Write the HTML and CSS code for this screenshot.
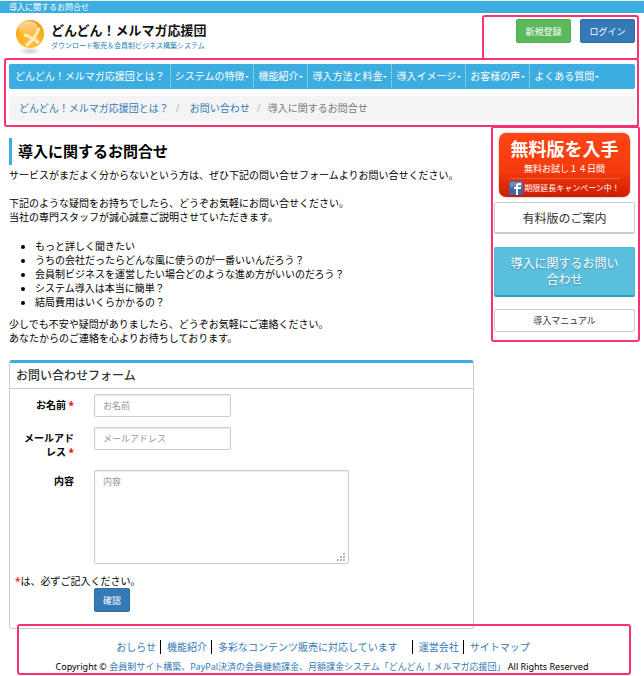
FILE: index.html
```
<!DOCTYPE html>
<html lang="ja">
<head>
    <meta charset="UTF-8">
    <meta name="viewport" content="width=device-width, initial-scale=1.0">
    <title>導入に関するお問合せ</title>
    <link rel="stylesheet" href="styles.css">
</head>
<body>
    <div class="topbar">導入に関するお問合せ</div>

    <header class="header">
        <a class="logo" href="#">
            <svg class="logo-mark" width="30" height="38" viewBox="0 0 30 38" aria-hidden="true">
                <defs>
                    <radialGradient id="ball" cx="50%" cy="80%" r="75%">
                        <stop offset="0" stop-color="#ffc43c"/>
                        <stop offset="0.6" stop-color="#fbb022"/>
                        <stop offset="1" stop-color="#f0a010"/>
                    </radialGradient>
                    <linearGradient id="shine" x1="0" y1="0" x2="0" y2="1">
                        <stop offset="0" stop-color="#fff" stop-opacity="0.6"/>
                        <stop offset="1" stop-color="#fff" stop-opacity="0.1"/>
                    </linearGradient>
                    <radialGradient id="shade">
                        <stop offset="0" stop-color="#ccc"/>
                        <stop offset="1" stop-color="#fff"/>
                    </radialGradient>
                </defs>
                <ellipse cx="15" cy="32" rx="11" ry="4" fill="url(#shade)"/>
                <circle cx="15" cy="15" r="14" fill="url(#ball)"/>
                <path d="M24 9c-2 7-6 12-13 18M9 16c6 1 10 4 15 8" fill="none" stroke="#ffedc0" stroke-width="3"/>
                <ellipse cx="13" cy="9" rx="10" ry="7" fill="url(#shine)"/>
            </svg>
            <span class="logo-text">
                <strong>どんどん！メルマガ応援団</strong>
                <small>ダウンロード販売＆会員制ビジネス構築システム</small>
            </span>
        </a>
        <div class="account">
            <button type="button" class="btn btn-success">新規登録</button>
            <button type="button" class="btn btn-primary">ログイン</button>
            <div class="mark mark-account"></div>
        </div>
    </header>

    <div class="nav-area">
        <nav class="navbar">
            <a href="#">どんどん！メルマガ応援団とは？</a>
            <a href="#" class="drop">システムの特徴</a>
            <a href="#" class="drop">機能紹介</a>
            <a href="#" class="drop">導入方法と料金</a>
            <a href="#" class="drop">導入イメージ</a>
            <a href="#" class="drop">お客様の声</a>
            <a href="#" class="drop">よくある質問</a>
        </nav>
        <div class="breadcrumb">
            <a href="#">どんどん！メルマガ応援団とは？</a>
            <span class="slash">/</span>
            <a href="#">お問い合わせ</a>
            <span class="slash slash-last">/</span>
            <span>導入に関するお問合せ</span>
        </div>
        <div class="mark mark-nav"></div>
    </div>

    <div class="columns">
        <main>
            <h1>導入に関するお問合せ</h1>
            <p>サービスがまだよく分からないという方は、ぜひ下記の問い合せフォームよりお問い合せください。</p>
            <p class="lead">下記のような疑問をお持ちでしたら、どうぞお気軽にお問い合せください。<br>当社の専門スタッフが誠心誠意ご説明させていただきます。</p>
            <ul>
                <li>もっと詳しく聞きたい</li>
                <li>うちの会社だったらどんな風に使うのが一番いいんだろう？</li>
                <li>会員制ビジネスを運営したい場合どのような進め方がいいのだろう？</li>
                <li>システム導入は本当に簡単？</li>
                <li>結局費用はいくらかかるの？</li>
            </ul>
            <p>少しでも不安や疑問がありましたら、どうぞお気軽にご連絡ください。<br>あなたからのご連絡を心よりお待ちしております。</p>

            <form class="panel">
                <h2>お問い合わせフォーム</h2>
                <div class="row">
                    <label for="name">お名前 <span class="req">*</span></label>
                    <input type="text" id="name" placeholder="お名前">
                </div>
                <div class="row">
                    <label for="mail">メールアド<br>レス <span class="req">*</span></label>
                    <input type="text" id="mail" placeholder="メールアドレス">
                </div>
                <div class="row">
                    <label for="body">内容</label>
                    <div class="area">
                        <textarea id="body" placeholder="内容"></textarea>
                        <svg class="grip" width="8" height="8" viewBox="0 0 8 8" fill="#b5b5b5" aria-hidden="true">
                            <path d="M6 0h2v2h-2zM3 3h2v2h-2zM6 3h2v2h-2zM0 6h2v2h-2zM3 6h2v2h-2zM6 6h2v2h-2z"/>
                        </svg>
                    </div>
                </div>
                <p class="note"><span class="req">*</span>は、必ずご記入ください。</p>
                <button type="button" class="btn btn-primary btn-confirm">確認</button>
            </form>
        </main>

        <aside>
            <button type="button" class="free">
                <strong>無料版を入手</strong>
                <span class="trial">無料お試し１４日間</span>
                <span class="campaign">
                    <svg width="14" height="14" viewBox="0 0 14 14" aria-hidden="true">
                        <rect width="14" height="14" rx="1" fill="#4564a5"/>
                        <path d="M1 1h12v5q-6-2-12 1z" fill="#6f8cc0"/>
                        <path d="M7 14V8H5V6h2V5c0-2 1-3 3-3h2v2h-1c-1 0-2 0-2 1v1h3v2H9v6z" fill="#fff"/>
                    </svg>
                    期限延長キャンペーン中！
                </span>
            </button>
            <button type="button" class="side-btn paid">有料版のご案内</button>
            <button type="button" class="side-btn contact">導入に関するお問い合わせ</button>
            <button type="button" class="side-btn manual">導入マニュアル</button>
            <div class="mark mark-side"></div>
        </aside>
    </div>

    <footer>
        <div class="footer-links">
            <a href="#">おしらせ</a>
            <a href="#">機能紹介</a>
            <a href="#" class="wide">多彩なコンテンツ販売に対応しています</a>
            <a href="#">運営会社</a>
            <a href="#">サイトマップ</a>
        </div>
        <div class="copyright">Copyright © <a href="#">会員制サイト構築、PayPal決済の会員継続課金、月額課金システム「どんどん！メルマガ応援団」</a> All Rights Reserved</div>
        <div class="mark mark-footer"></div>
    </footer>
</body>
</html>
```
FILE: styles.css
```
* {
    box-sizing: border-box;
}

body {
    margin: 0;
    border-top: 1px solid #eef2ee;
    background-color: #fff;
    color: #000;
    font-family: "Noto Sans", "Noto Sans CJK JP", sans-serif;
    font-size: 10px;
    line-height: 14px;
}

a {
    color: #337ab7;
    text-decoration: none;
}

button, input, textarea {
    font-family: inherit;
    font-size: 9px;
}

p {
    margin: 0;
}

.topbar {
    height: 12px;
    padding: 0 9px;
    background-color: #3cade0;
    color: #fff;
    font-size: 8px;
    line-height: 12px;
}

.header {
    display: flex;
    justify-content: space-between;
    align-items: flex-start;
    height: 51px;
    padding: 6px 9px 0 15px;
}

.logo {
    display: flex;
    gap: 6px;
}

.logo-text {
    display: flex;
    flex-direction: column;
    padding-top: 2px;
}

.logo-text strong {
    color: #111;
    font-size: 13px;
    line-height: 18px;
}

.logo-text small {
    color: #1c7fb0;
    font-size: 7px;
    line-height: 14px;
}

.account {
    position: relative;
    display: flex;
    gap: 9px;
}

.btn {
    width: 55px;
    height: 24px;
    padding: 0;
    border: 1px solid #2e6da4;
    border-radius: 2px;
    background-color: #337ab7;
    color: #fff;
}

.btn-success {
    border-color: #4cae4c;
    background-color: #5cb85c;
}

/* pink frames round the shared parts of the page */
.mark {
    position: absolute;
    border: 2px solid #f9336f;
    border-radius: 3px;
    pointer-events: none;
}

.mark-account {
    inset: -4px -4px -17px -34px;
}

.mark-nav {
    inset: -6px -4px -6px -5px;
}

.mark-side {
    inset: -7px -5px -10px -3px;
}

.mark-footer {
    inset: 0 13px 0 17px;
}

.nav-area {
    position: relative;
    margin: 0 9px;
}

.navbar {
    display: flex;
    height: 25px;
    border-radius: 2px;
    background-color: #3cade0;
    padding-left: 2px;
}

.navbar a {
    height: 23px;
    padding: 0 4px;
    border-right: 1px dotted #cde6f2;
    color: #fff;
    line-height: 24px;
    white-space: nowrap;
}

.navbar a:first-child {
    padding-right: 5px;
}

.navbar a:last-child {
    border-right: none;
}

.drop::after {
    content: "";
    display: inline-block;
    margin-left: 1px;
    border: 2px solid transparent;
    border-top-color: #fff;
    border-bottom: none;
    vertical-align: middle;
}

.breadcrumb {
    display: flex;
    height: 25px;
    margin-top: 7px;
    padding-left: 10px;
    border-radius: 3px;
    background-color: #f4f4f4;
    color: #777;
    line-height: 25px;
}

.slash {
    width: 21px;
    padding-left: 7px;
    color: #bbb;
}

.slash-last {
    width: 18px;
}

.columns {
    display: grid;
    grid-template-columns: 1fr 141px;
    gap: 20px;
    align-items: start;
    padding: 12px 9px 0;
}

h1 {
    margin: 5px 0 3px;
    padding-left: 6px;
    border-left: 3px solid #3cade0;
    font-size: 15px;
    line-height: 27px;
}

.lead {
    margin-top: 14px;
}

ul {
    margin: 15px 0 8px;
    padding-left: 26px;
}

.panel {
    margin-top: 15px;
    padding-bottom: 16px;
    border: 1px solid #ccc;
    border-top: 3px solid #3cade0;
    border-radius: 3px;
}

.panel h2 {
    margin: 0 0 5px;
    padding: 0 6px;
    border-bottom: 1px solid #ccc;
    color: #333;
    font-size: 12px;
    font-weight: 500;
    line-height: 25px;
}

.row {
    display: grid;
    grid-template-columns: 59px 1fr;
    column-gap: 20px;
    align-items: start;
    margin-bottom: 10px;
    padding: 0 5px;
}

.row label {
    padding: 4px 0 1px;
    font-weight: bold;
    text-align: right;
}

.req {
    color: #f00;
}

input, textarea {
    display: block;
    width: 137px;
    height: 23px;
    padding: 0 8px;
    border: 1px solid #ccc;
    border-radius: 2px;
    box-shadow: inset 0 1px 1px rgba(0, 0, 0, 0.08);
}

textarea {
    width: 100%;
    height: 94px;
    padding-top: 4px;
    line-height: 14px;
    resize: none;
}

::placeholder {
    color: #999;
}

.area {
    position: relative;
    width: 255px;
}

.grip {
    position: absolute;
    right: 4px;
    bottom: 3px;
}

.note {
    padding: 0 5px;
}

.btn-confirm {
    display: block;
    width: 36px;
    margin-left: 84px;
}

aside {
    position: relative;
    display: flex;
    flex-direction: column;
}

.free {
    display: flex;
    flex-direction: column;
    align-items: center;
    height: 64px;
    margin: 0 5px 5px;
    padding: 4px 0 0;
    border: none;
    border-radius: 7px;
    background: linear-gradient(#ff4416, #f53a0c 60%, #cc1c00);
    box-shadow: 0 0 2px #888;
    color: #fff;
}

.free strong {
    font-size: 18px;
    line-height: 25px;
}

.trial {
    font-size: 9px;
    line-height: 13px;
}

.campaign {
    display: flex;
    align-items: center;
    gap: 1px;
    margin-top: 3px;
    padding-top: 2px;
    border-top: 1px solid #e0603c;
    font-size: 8px;
    line-height: 14px;
    white-space: nowrap;
}

.side-btn {
    border: 1px solid #ccc;
    border-radius: 2px;
    background-color: #fff;
    color: #333;
}

.paid {
    height: 32px;
    margin-bottom: 13px;
    border-bottom-width: 2px;
    font-size: 12px;
}

.contact {
    height: 50px;
    margin-bottom: 12px;
    padding: 0 14px;
    border-color: #46b8da;
    border-bottom: 2px solid #2a9fc4;
    background-color: #5bc0de;
    color: #fff;
    font-size: 12px;
    line-height: 16px;
    text-shadow: 0 1px 2px rgba(0, 0, 0, 0.3);
}

.manual {
    height: 23px;
}

footer {
    position: relative;
    margin-top: -5px;
    padding: 16px 0 1px;
    text-align: center;
}

.footer-links {
    display: flex;
    justify-content: center;
    margin-bottom: 6px;
}

.footer-links a {
    padding: 0 4px 0 6px;
    border-right: 1px solid #000;
}

.footer-links .wide {
    padding-right: 14px;
}

.footer-links a:last-child {
    border-right: none;
}

.copyright {
    font-size: 9px;
    white-space: nowrap;
}
```
